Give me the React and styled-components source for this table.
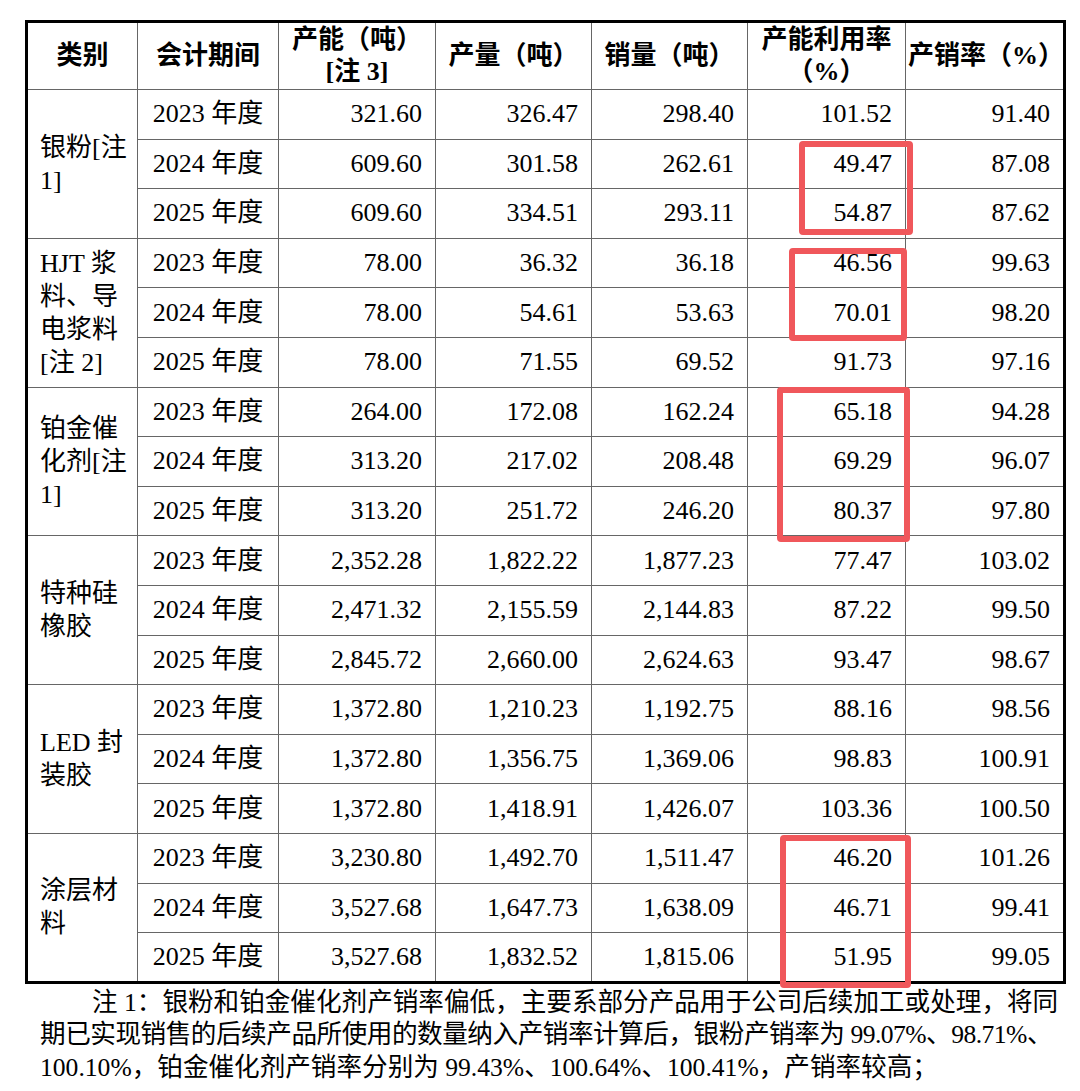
import React from 'react';
import styled, { createGlobalStyle } from 'styled-components';

const FONT = `"Liberation Serif", "Noto Sans CJK SC", serif`;

const groups = [
  {
    label: ['银粉[注', '1]'],
    rows: [
      ['2023 年度', '321.60', '326.47', '298.40', '101.52', '91.40'],
      ['2024 年度', '609.60', '301.58', '262.61', '49.47', '87.08'],
      ['2025 年度', '609.60', '334.51', '293.11', '54.87', '87.62'],
    ],
  },
  {
    label: ['HJT 浆', '料、导', '电浆料', '[注 2]'],
    rows: [
      ['2023 年度', '78.00', '36.32', '36.18', '46.56', '99.63'],
      ['2024 年度', '78.00', '54.61', '53.63', '70.01', '98.20'],
      ['2025 年度', '78.00', '71.55', '69.52', '91.73', '97.16'],
    ],
  },
  {
    label: ['铂金催', '化剂[注', '1]'],
    rows: [
      ['2023 年度', '264.00', '172.08', '162.24', '65.18', '94.28'],
      ['2024 年度', '313.20', '217.02', '208.48', '69.29', '96.07'],
      ['2025 年度', '313.20', '251.72', '246.20', '80.37', '97.80'],
    ],
  },
  {
    label: ['特种硅', '橡胶'],
    rows: [
      ['2023 年度', '2,352.28', '1,822.22', '1,877.23', '77.47', '103.02'],
      ['2024 年度', '2,471.32', '2,155.59', '2,144.83', '87.22', '99.50'],
      ['2025 年度', '2,845.72', '2,660.00', '2,624.63', '93.47', '98.67'],
    ],
  },
  {
    label: ['LED 封', '装胶'],
    rows: [
      ['2023 年度', '1,372.80', '1,210.23', '1,192.75', '88.16', '98.56'],
      ['2024 年度', '1,372.80', '1,356.75', '1,369.06', '98.83', '100.91'],
      ['2025 年度', '1,372.80', '1,418.91', '1,426.07', '103.36', '100.50'],
    ],
  },
  {
    label: ['涂层材', '料'],
    rows: [
      ['2023 年度', '3,230.80', '1,492.70', '1,511.47', '46.20', '101.26'],
      ['2024 年度', '3,527.68', '1,647.73', '1,638.09', '46.71', '99.41'],
      ['2025 年度', '3,527.68', '1,832.52', '1,815.06', '51.95', '99.05'],
    ],
  },
];

// hand-drawn red annotation boxes, placed over the table
const marks = [
  { left: 774, top: 121, width: 114, height: 94 },
  { left: 764, top: 228, width: 118, height: 93 },
  { left: 752, top: 367, width: 133, height: 155 },
  { left: 755, top: 815, width: 131, height: 153 },
];

const colWidths = [111, 141, 157, 156, 156, 158, 159];

const GlobalStyle = createGlobalStyle`
  body {
    margin: 0;
    background: #fff;
    color: #000;
    font-family: ${FONT};
  }
`;

const Page = styled.div`
  padding: 20px 0 0 25px;
  width: 1055px;
`;

const TableWrap = styled.div`
  position: relative;
  width: 1041px;
`;

const Table = styled.table`
  border-collapse: collapse;
  table-layout: fixed;
  width: 1041px;
  border: 3.5px solid #000;
  font-family: ${FONT};
  font-size: 26px;
`;

const HeadRow = styled.tr`
  height: 68px;
`;

const Th = styled.th`
  border: 1.5px solid #666;
  border-top: 3.5px solid #000;
  font-weight: 700;
  line-height: 32px;
  text-align: center;
  vertical-align: middle;
  padding: 0 2px;
  white-space: nowrap;
`;

const BodyRow = styled.tr`
  height: 49.6px;
`;

const Td = styled.td`
  border: 1.5px solid #666;
  padding: 0 13px;
  line-height: 30px;
  vertical-align: middle;
  white-space: nowrap;
  text-align: ${(p) => p.$align || 'right'};
`;

const LabelCell = styled.td`
  border: 1.5px solid #666;
  border-left: 3.5px solid #000;
  padding: 0 4px 0 12px;
  line-height: 33px;
  text-align: left;
  vertical-align: middle;
`;

const Mark = styled.div`
  position: absolute;
  box-sizing: border-box;
  border: 6px solid #f0575b;
  border-radius: 4px;
  pointer-events: none;
`;

const Note = styled.div`
  margin: 3px 0 0 15px;
  width: 1012px;
  font-family: ${FONT};
  font-size: 25.6px;
  line-height: 32.5px;
`;

const NoteLine = styled.div`
  white-space: nowrap;
  letter-spacing: ${(p) => (p.$tight ? '-0.55px' : '0')};
  text-align: ${(p) => (p.$last ? 'left' : 'justify')};
  text-align-last: ${(p) => (p.$last ? 'left' : 'justify')};
  text-indent: ${(p) => (p.$first ? '52px' : '0')};
`;

const headers = [
  ['类别'],
  ['会计期间'],
  ['产能（吨）', '[注 3]'],
  ['产量（吨）'],
  ['销量（吨）'],
  ['产能利用率', '（%）'],
  ['产销率（%）'],
];

const Lines = ({ lines }) =>
  lines.map((l, i) => (
    <React.Fragment key={i}>
      {i > 0 && <br />}
      {l}
    </React.Fragment>
  ));

const App = () => {
  return (
    <Page>
      <GlobalStyle />
      <TableWrap>
        <Table>
          <colgroup>
            {colWidths.map((w, i) => (
              <col key={i} style={{ width: w }} />
            ))}
          </colgroup>
          <thead>
            <HeadRow>
              {headers.map((h, i) => (
                <Th key={i}>
                  <Lines lines={h} />
                </Th>
              ))}
            </HeadRow>
          </thead>
          <tbody>
            {groups.map((g, gi) =>
              g.rows.map((r, ri) => (
                <BodyRow key={`${gi}-${ri}`}>
                  {ri === 0 && (
                    <LabelCell rowSpan={g.rows.length}>
                      <Lines lines={g.label} />
                    </LabelCell>
                  )}
                  {r.map((v, ci) => (
                    <Td key={ci} $align={ci === 0 ? 'center' : 'right'}>
                      {v}
                    </Td>
                  ))}
                </BodyRow>
              ))
            )}
          </tbody>
        </Table>
        {marks.map((m, i) => (
          <Mark key={i} style={{ left: m.left, top: m.top, width: m.width, height: m.height }} />
        ))}
      </TableWrap>
      <Note>
        <NoteLine $first>
          注 1：银粉和铂金催化剂产销率偏低，主要系部分产品用于公司后续加工或处理，将同
        </NoteLine>
        <NoteLine $tight>
          期已实现销售的后续产品所使用的数量纳入产销率计算后，银粉产销率为 99.07%、98.71%、
        </NoteLine>
        <NoteLine $last>100.10%，铂金催化剂产销率分别为 99.43%、100.64%、100.41%，产销率较高；</NoteLine>
      </Note>
    </Page>
  );
};

export default App;
